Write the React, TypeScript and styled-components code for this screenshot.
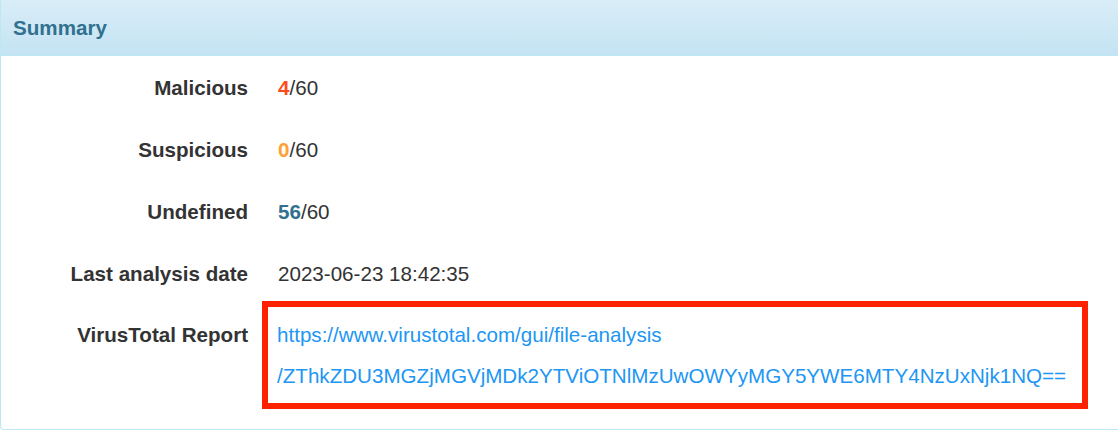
import styled, { createGlobalStyle } from "styled-components";

const GlobalStyle = createGlobalStyle`
  html, body {
    margin: 0;
    padding: 0;
    background: #fff;
    overflow: hidden;
  }
  body {
    font-family: "Liberation Sans", Arial, sans-serif;
    color: #333;
  }
`;

type Tone = "danger" | "warning" | "info";

const rows: { label: string; count: number; tone: Tone }[] = [
  { label: "Malicious", count: 4, tone: "danger" },
  { label: "Suspicious", count: 0, tone: "warning" },
  { label: "Undefined", count: 56, tone: "info" },
];

export default function App() {
  return (
    <>
      <GlobalStyle />
      <Panel>
        <Heading>
          <Title>Summary</Title>
        </Heading>
        <Body>
          {rows.map((r) => (
            <Row key={r.label}>
              <Label>{r.label}</Label>
              <Value>
                <Count $tone={r.tone}>{r.count}</Count>/60
              </Value>
            </Row>
          ))}
          <Row>
            <Label>Last analysis date</Label>
            <Value>2023-06-23 18:42:35</Value>
          </Row>
          <ReportRow>
            <ReportLabel>VirusTotal Report</ReportLabel>
            <Highlight>
              <Link href="#">
                https://www.virustotal.com/gui/file-analysis
                <br />
                /ZThkZDU3MGZjMGVjMDk2YTViOTNlMzUwOWYyMGY5YWE6MTY4NzUxNjk1NQ==
              </Link>
            </Highlight>
          </ReportRow>
        </Body>
      </Panel>
    </>
  );
}

const Panel = styled.div`
  width: 1120px;
  border: 1px solid #bce8f1;
  border-top: none;
  border-radius: 0 0 4px 4px;
  background: #fff;
  font-size: 20.6px;
`;

const Heading = styled.div`
  height: 55px;
  display: flex;
  align-items: center;
  padding: 0 12px;
  background: linear-gradient(to bottom, #d9edf7 0%, #c4e3f3 100%);
  border-bottom: 1px solid #bce8f1;
`;

const Title = styled.h3`
  margin: 0;
  font-size: 20.6px;
  font-weight: bold;
  color: #31708f;
`;

const Body = styled.div`
  padding: 1px 0 20px;
`;

const Row = styled.div`
  display: flex;
  align-items: center;
  height: 62px;
`;

const Label = styled.div`
  width: 247px;
  text-align: right;
  font-weight: bold;
  color: #333;
  flex: none;
`;

const Value = styled.div`
  padding-left: 30px;
  color: #333;
`;

const toneColor: Record<Tone, string> = {
  danger: "#ff4a1c",
  warning: "#ffa033",
  info: "#31708f",
};

const Count = styled.span<{ $tone: Tone }>`
  font-weight: bold;
  color: ${(p) => toneColor[p.$tone]};
`;

const ReportRow = styled.div`
  display: flex;
  align-items: flex-start;
  margin-top: -4px;
`;

const ReportLabel = styled(Label)`
  margin-top: 13px;
  line-height: 41px;
`;

const Highlight = styled.div`
  margin-left: 14px;
  border: 6px solid #ff2200;
  padding: 7px 16px 7px 9px;
  line-height: 41px;
`;

const Link = styled.a`
  color: #2196f3;
  text-decoration: none;
`;
